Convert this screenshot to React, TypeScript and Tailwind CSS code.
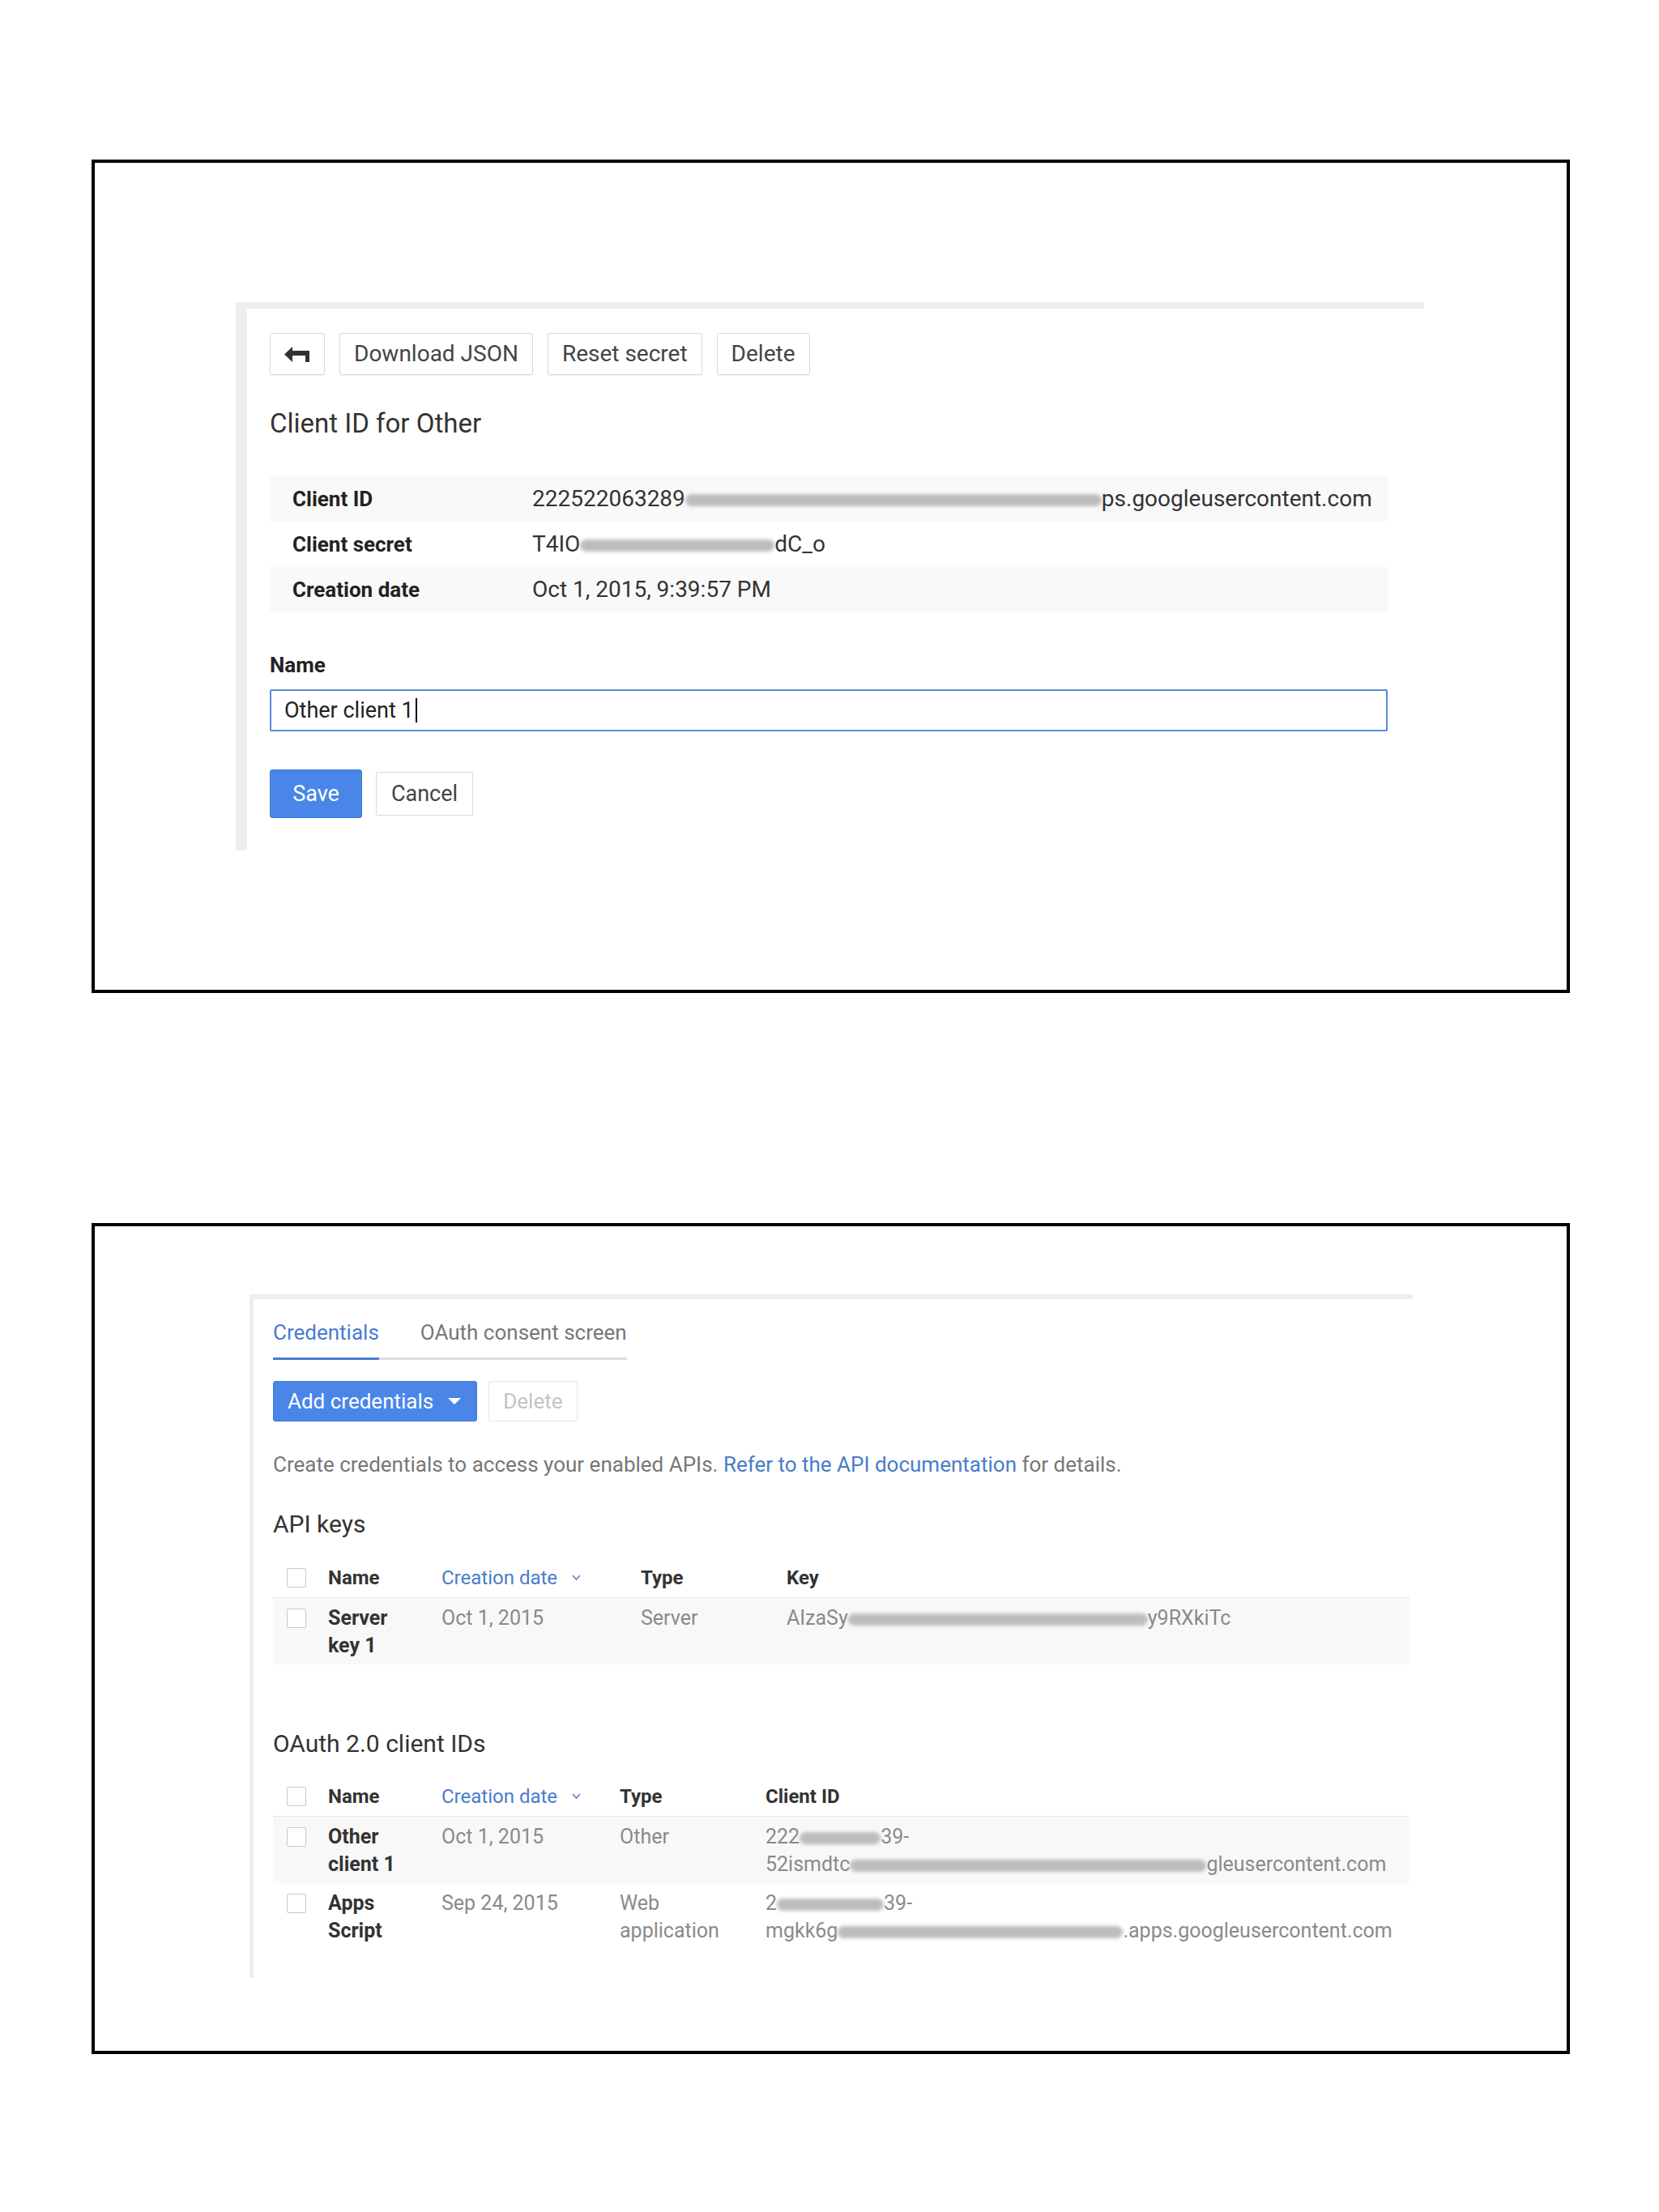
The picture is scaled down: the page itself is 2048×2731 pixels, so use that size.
import React from "react";

// ---------- small pieces ----------

function Blur({ className }: { className: string }) {
  return (
    <span
      className={`inline-block align-middle h-[15px] rounded-full bg-[#bdbdbd] blur-[2px] ${className}`}
    />
  );
}

function Checkbox() {
  return <span className="block w-[24px] h-[24px] border border-[#c8c8c8] rounded-[2px] bg-white" />;
}

function OutlineButton({ children }: { children: React.ReactNode }) {
  return (
    <button className="h-[52px] px-[17px] flex items-center border border-[#d9d9d9] rounded-[3px] bg-white text-[28px] text-[#444] shadow-[0_1px_1px_rgba(0,0,0,0.06)]">
      {children}
    </button>
  );
}

function BackIcon() {
  return (
    <svg width="32" height="19" viewBox="0 0 32 19" fill="#333">
      <path d="M0 9.5 L10 0 L10 19 Z" />
      <rect x="9" y="5" width="22" height="6" />
      <rect x="26" y="5" width="5" height="14" />
    </svg>
  );
}

function Chevron() {
  return (
    <svg width="11" height="7" viewBox="0 0 11 7" className="ml-[18px]">
      <polyline points="1,1 5.5,6 10,1" fill="none" stroke="#4a7cc9" strokeWidth="1.5" />
    </svg>
  );
}

// ---------- panels ----------

function ClientDetail() {
  const rows: { label: string; value: React.ReactNode; shaded: boolean }[] = [
    {
      label: "Client ID",
      value: (
        <>
          222522063289
          <Blur className="w-[514px]" />
          ps.googleusercontent.com
        </>
      ),
      shaded: true,
    },
    {
      label: "Client secret",
      value: (
        <>
          T4IO
          <Blur className="w-[240px]" />
          dC_o
        </>
      ),
      shaded: false,
    },
    { label: "Creation date", value: "Oct 1, 2015, 9:39:57 PM", shaded: true },
  ];

  return (
    <div className="w-[1467px] border-l-[14px] border-t-[8px] border-[#eeeeee] pl-[28px] pt-[30px] pb-[40px]">
      {/* Toolbar */}
      <div className="flex gap-[18px]">
        <button className="w-[68px] h-[52px] flex items-center justify-center border border-[#d9d9d9] rounded-[3px] bg-white shadow-[0_1px_1px_rgba(0,0,0,0.06)]">
          <BackIcon />
        </button>
        <OutlineButton>Download JSON</OutlineButton>
        <OutlineButton>Reset secret</OutlineButton>
        <OutlineButton>Delete</OutlineButton>
      </div>

      <div className="mt-[41px] text-[33px] leading-[38px] text-[#333]">Client ID for Other</div>

      {/* Details table */}
      <div className="mt-[46px] w-[1380px]">
        {rows.map((r) => (
          <div
            key={r.label}
            className={`h-[56px] flex items-center whitespace-nowrap ${r.shaded ? "bg-[#f9f9f9]" : "bg-white"}`}
          >
            <span className="w-[324px] pl-[28px] text-[26px] font-bold text-[#222]">{r.label}</span>
            <span className="text-[28px] text-[#333]">{r.value}</span>
          </div>
        ))}
      </div>

      {/* Name field */}
      <div className="mt-[50px] text-[26px] leading-[30px] font-bold text-[#222]">Name</div>
      <div className="mt-[15px] w-[1380px] h-[52px] border-2 border-[#5b8ad6] rounded-[2px] px-[16px] flex items-center text-[27px] text-[#222]">
        Other client 1
        <span className="ml-[2px] w-[2px] h-[30px] bg-black" />
      </div>

      <div className="mt-[47px] flex items-center gap-[17px]">
        <button className="w-[114px] h-[60px] rounded-[3px] bg-[#4a86e8] border border-[#3f78d8] text-[27px] text-white">
          Save
        </button>
        <button className="w-[120px] h-[54px] rounded-[2px] bg-white border border-[#d9d9d9] text-[27px] text-[#444]">
          Cancel
        </button>
      </div>
    </div>
  );
}

function HeaderRow({ type, last, wide }: { type: string; last: string; wide: boolean }) {
  return (
    <div className="h-[50px] flex items-center border-b border-[#e8e8e8] pl-[17px] text-[24px] whitespace-nowrap">
      <span className="w-[51px]">
        <Checkbox />
      </span>
      <span className="w-[140px] font-bold text-[#333]">Name</span>
      <span className={`flex items-center text-[#4a7cc9] ${wide ? "w-[246px]" : "w-[220px]"}`}>
        Creation date
        <Chevron />
      </span>
      <span className="w-[180px] font-bold text-[#333]">{type}</span>
      <span className="font-bold text-[#333]">{last}</span>
    </div>
  );
}

function DataRow({
  name,
  date,
  type,
  value,
  wide,
  shaded,
}: {
  name: string[];
  date: string;
  type: string[];
  value: React.ReactNode;
  wide: boolean;
  shaded: boolean;
}) {
  return (
    <div
      className={`flex items-start pl-[17px] pt-[8px] pb-[6px] h-[82px] text-[25px] leading-[34px] whitespace-nowrap ${shaded ? "bg-[#f8f8f8]" : "bg-white"}`}
    >
      <span className="w-[51px] h-[34px] flex items-center">
        <Checkbox />
      </span>
      <span className="w-[140px] font-bold text-[#333]">
        {name.map((n) => (
          <span key={n} className="block">
            {n}
          </span>
        ))}
      </span>
      <span className={`text-[#8a8a8a] ${wide ? "w-[246px]" : "w-[220px]"}`}>{date}</span>
      <span className="w-[180px] text-[#8a8a8a]">
        {type.map((t) => (
          <span key={t} className="block">
            {t}
          </span>
        ))}
      </span>
      <span className="text-[#8a8a8a]">{value}</span>
    </div>
  );
}

function CredentialsList() {
  return (
    <div className="w-[1436px] border-l-[5px] border-t-[6px] border-[#eeeeee] pl-[24px] pt-[26px] pb-[35px]">
      {/* Tabs */}
      <div className="flex text-[26px] leading-[30px]">
        <span className="pb-[16px] border-b-[3px] border-[#4a7bd0] text-[#4a7bd0]">Credentials</span>
        <span className="pl-[51px] pb-[16px] border-b-[3px] border-[#dddddd] text-[#777]">
          OAuth consent screen
        </span>
      </div>

      <div className="mt-[26px] flex gap-[14px]">
        <button className="h-[50px] pl-[17px] pr-[19px] flex items-center gap-[18px] rounded-[3px] bg-[#4a86e8] border border-[#3f78d8] text-[26px] text-white">
          Add credentials
          <svg width="16" height="8" viewBox="0 0 16 8" fill="white">
            <path d="M0 0 L16 0 L8 8 Z" />
          </svg>
        </button>
        <button className="h-[50px] px-[17px] rounded-[2px] bg-white border border-[#e6e6e6] text-[26px] text-[#c4c4c4]">
          Delete
        </button>
      </div>

      <p className="mt-[38px] text-[26px] leading-[30px] text-[#777]">
        Create credentials to access your enabled APIs.{" "}
        <span className="text-[#4a7cc9]">Refer to the API documentation</span> for details.
      </p>

      {/* API keys */}
      <div className="mt-[42px] text-[30px] leading-[34px] text-[#333]">API keys</div>
      <div className="mt-[24px] w-[1403px]">
        <HeaderRow type="Type" last="Key" wide />
        <DataRow
          name={["Server", "key 1"]}
          date="Oct 1, 2015"
          type={["Server"]}
          wide
          shaded
          value={
            <>
              AIzaSy
              <Blur className="w-[370px]" />
              y9RXkiTc
            </>
          }
        />
      </div>

      {/* OAuth client IDs */}
      <div className="mt-[81px] text-[30px] leading-[34px] text-[#333]">OAuth 2.0 client IDs</div>
      <div className="mt-[23px] w-[1403px]">
        <HeaderRow type="Type" last="Client ID" wide={false} />
        <DataRow
          name={["Other", "client 1"]}
          date="Oct 1, 2015"
          type={["Other"]}
          wide={false}
          shaded
          value={
            <>
              <span className="block">
                222
                <Blur className="w-[100px]" />
                39-
              </span>
              <span className="block">
                52ismdtc
                <Blur className="w-[440px]" />
                gleusercontent.com
              </span>
            </>
          }
        />
        <DataRow
          name={["Apps", "Script"]}
          date="Sep 24, 2015"
          type={["Web", "application"]}
          wide={false}
          shaded={false}
          value={
            <>
              <span className="block">
                2
                <Blur className="w-[132px]" />
                39-
              </span>
              <span className="block">
                mgkk6g
                <Blur className="w-[352px]" />
                .apps.googleusercontent.com
              </span>
            </>
          }
        />
      </div>
    </div>
  );
}

export default function App() {
  return (
    <div className="w-[2048px] h-[2731px] bg-white pt-[197px] pl-[113px] font-['Roboto','Liberation_Sans',sans-serif]">
      <div className="w-[1825px] h-[1029px] border-4 border-black pt-[172px] pl-[174px]">
        <ClientDetail />
      </div>
      <div className="mt-[284px] w-[1825px] h-[1026px] border-4 border-black pt-[84px] pl-[191px]">
        <CredentialsList />
      </div>
    </div>
  );
}
